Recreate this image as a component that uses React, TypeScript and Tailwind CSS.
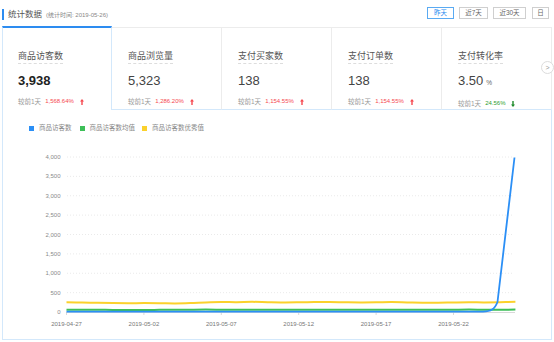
import React from 'react'

const FONT = { fontFamily: '"Liberation Sans", "Noto Sans CJK SC", sans-serif' }

const tabs = [
  { label: '商品访客数', value: '3,938', pct: '1,568.64%', up: true, bold: true },
  { label: '商品浏览量', value: '5,323', pct: '1,286.20%', up: true },
  { label: '支付买家数', value: '138', pct: '1,154.55%', up: true },
  { label: '支付订单数', value: '138', pct: '1,154.55%', up: true },
  { label: '支付转化率', value: '3.50', unit: '%', pct: '24.56%', up: false },
]

const X0 = 66.5
const DX = 15.48
const Y0 = 312
const yOf = (v: number) => Y0 - v * (155 / 4000)
const xOf = (i: number) => X0 + i * DX

const yellow = [250, 245, 236, 230, 228, 230, 228, 222, 230, 246, 256, 254, 262, 254, 248, 250, 255, 258, 252, 248, 250, 256, 248, 240, 238, 245, 250, 248, 252, 262]
const green = [58, 58, 56, 54, 52, 53, 55, 57, 60, 62, 60, 58, 56, 56, 58, 60, 58, 56, 56, 58, 60, 58, 56, 56, 58, 60, 62, 60, 60, 62]

function smooth(vals: number[]) {
  const pts = vals.map((v, i) => [xOf(i), yOf(v)])
  let d = `M${pts[0][0]},${pts[0][1]}`
  for (let i = 0; i < pts.length - 1; i++) {
    const p0 = pts[i - 1] || pts[i]
    const p1 = pts[i]
    const p2 = pts[i + 1]
    const p3 = pts[i + 2] || p2
    const c1x = p1[0] + (p2[0] - p0[0]) / 6
    const c1y = p1[1] + (p2[1] - p0[1]) / 6
    const c2x = p2[0] - (p3[0] - p1[0]) / 6
    const c2y = p2[1] - (p3[1] - p1[1]) / 6
    d += ` C${c1x},${c1y} ${c2x},${c2y} ${p2[0]},${p2[1]}`
  }
  return d
}

function Arrow({ up }: { up: boolean }) {
  const color = up ? '#f5484f' : '#1d8a2a'
  return (
    <svg width="4" height="6" viewBox="0 0 4 6" className="block">
      {up ? (
        <path d="M2 0 L4 2.6 L2.7 2.6 L2.7 6 L1.3 6 L1.3 2.6 L0 2.6 Z" fill={color} />
      ) : (
        <path d="M2 6 L4 3.4 L2.7 3.4 L2.7 0 L1.3 0 L1.3 3.4 L0 3.4 Z" fill={color} />
      )}
    </svg>
  )
}

function Chart() {
  const yTicks = [0, 500, 1000, 1500, 2000, 2500, 3000, 3500, 4000]
  const xTicks = ['2019-04-27', '2019-05-02', '2019-05-07', '2019-05-12', '2019-05-17', '2019-05-22']
  const blue = `M${X0},311.6 L483,311.6 C491,311.6 494.5,309.5 497.5,302 L514.5,157.5`
  return (
    <svg width="548" height="199" viewBox="3 140 548 199" className="block">
      {yTicks.map((v) => (
        <g key={v}>
          {v > 0 && (
            <line x1="67" x2="514" y1={yOf(v)} y2={yOf(v)} stroke="#e4e4e4" strokeWidth="0.8" strokeDasharray="1 2" />
          )}
          <text x="60.5" y={yOf(v) + 2} textAnchor="end" fontSize="6" fill="#8a8a8a" style={FONT}>
            {v.toLocaleString('en-US')}
          </text>
        </g>
      ))}
      <line x1="66" x2="515" y1="312.5" y2="312.5" stroke="#cfcfcf" strokeWidth="0.8" />
      {xTicks.map((t, i) => (
        <g key={t}>
          <line x1={xOf(i * 5)} x2={xOf(i * 5)} y1="312.5" y2="315" stroke="#cfcfcf" strokeWidth="0.8" />
          <text x={xOf(i * 5)} y="325.5" textAnchor="middle" fontSize="6" fill="#777" style={FONT}>
            {t}
          </text>
        </g>
      ))}
      <path d={smooth(yellow)} fill="none" stroke="#fbd12c" strokeWidth="2" />
      <path d={smooth(green)} fill="none" stroke="#3dbf58" strokeWidth="2" />
      <path d={blue} fill="none" stroke="#2b8ff6" strokeWidth="1.8" strokeLinejoin="round" />
    </svg>
  )
}

export default function App() {
  return (
    <div className="relative w-[554px] h-[342px] bg-white overflow-hidden text-[#333]" style={FONT}>
      {/* header */}
      <div className="flex items-center h-[26px]">
        <div className="flex items-center mt-[2px]">
          <span className="ml-[2px] w-[2px] h-[11px] bg-[#2d8cf0]" />
          <span className="ml-[4px] text-[8.5px] leading-[11px] text-[#555]">统计数据</span>
          <span className="ml-[4px] text-[6px] leading-[8px] text-[#888] mt-px">(统计时间: 2019-05-26)</span>
        </div>
        <div className="ml-auto mr-[5px] flex items-center gap-[5px] text-[6.5px]">
          <span className="w-[27px] h-[12px] flex items-center justify-center border border-[#5aaaf2] text-[#2d8cf0]">昨天</span>
          <span className="w-[29px] h-[12px] flex items-center justify-center border border-[#cfcfcf] text-[#666]">近7天</span>
          <span className="w-[33px] h-[12px] flex items-center justify-center border border-[#cfcfcf] text-[#666]">近30天</span>
          <span className="ml-[1px] w-[17px] h-[12px] flex items-center justify-center border border-[#cfcfcf] text-[#666]">日</span>
        </div>
      </div>

      {/* tabs */}
      <div className="flex ml-[2px] w-[550px] items-start">
        {tabs.map((t, i) => {
          const active = i === 0
          return (
            <div
              key={t.label}
              className={
                active
                  ? 'box-border w-[110px] h-[84px] border-t-2 border-t-[#2d8cf0] border-x border-x-[#d3e8fb] pl-[15px] pt-[14px]'
                  : 'box-border w-[110px] h-[83px] mt-px border-t border-t-[#ececec] border-b border-b-[#d3e8fb] border-r border-r-[#ececec] pl-[16px] pt-[14px]'
              }
            >
              <div className="inline-block text-[9px] leading-[11px] text-[#555] pb-px border-b border-dashed border-[#dddddd]">
                {t.label}
              </div>
              <div className={`mt-[7px] flex items-baseline text-[13px] leading-[15px] ${t.bold ? 'font-bold text-[#222]' : 'text-[#444]'}`}>
                {t.value}
                {t.unit && <span className="ml-[3px] text-[6.5px] text-[#666]">{t.unit}</span>}
              </div>
              <div className="mt-[9px] flex items-center leading-[9px]">
                <span className="text-[6.5px] text-[#999]">较前1天</span>
                <span className={`ml-[4px] text-[6px] ${t.up ? 'text-[#f5484f]' : 'text-[#2e9d2e]'}`}>{t.pct}</span>
                <span className="ml-[6px]">
                  <Arrow up={t.up} />
                </span>
              </div>
            </div>
          )
        })}
      </div>

      {/* scroll arrow */}
      <div className="absolute left-[541px] top-[61px] w-[13px] h-[13px] rounded-full border border-[#dcdcdc] bg-white flex items-center justify-center text-[7px] leading-none text-[#999]">
        &gt;
      </div>

      {/* chart panel */}
      <div className="ml-[2px] w-[550px] border-x border-b border-[#d3e8fb]">
        <div className="h-[30px] pt-[13px] pl-[26px]">
          <div className="flex items-center h-[10px] text-[6.5px] text-[#888]">
            <span className="w-[5px] h-[5px] bg-[#2b8ff6]" />
            <span className="ml-[5px]">商品访客数</span>
            <span className="ml-[8px] w-[5px] h-[5px] bg-[#3dbf58]" />
            <span className="ml-[5px]">商品访客数均值</span>
            <span className="ml-[7px] w-[5px] h-[5px] bg-[#fbd12c]" />
            <span className="ml-[5px]">商品访客数优秀值</span>
          </div>
        </div>
        <Chart />
      </div>
    </div>
  )
}
